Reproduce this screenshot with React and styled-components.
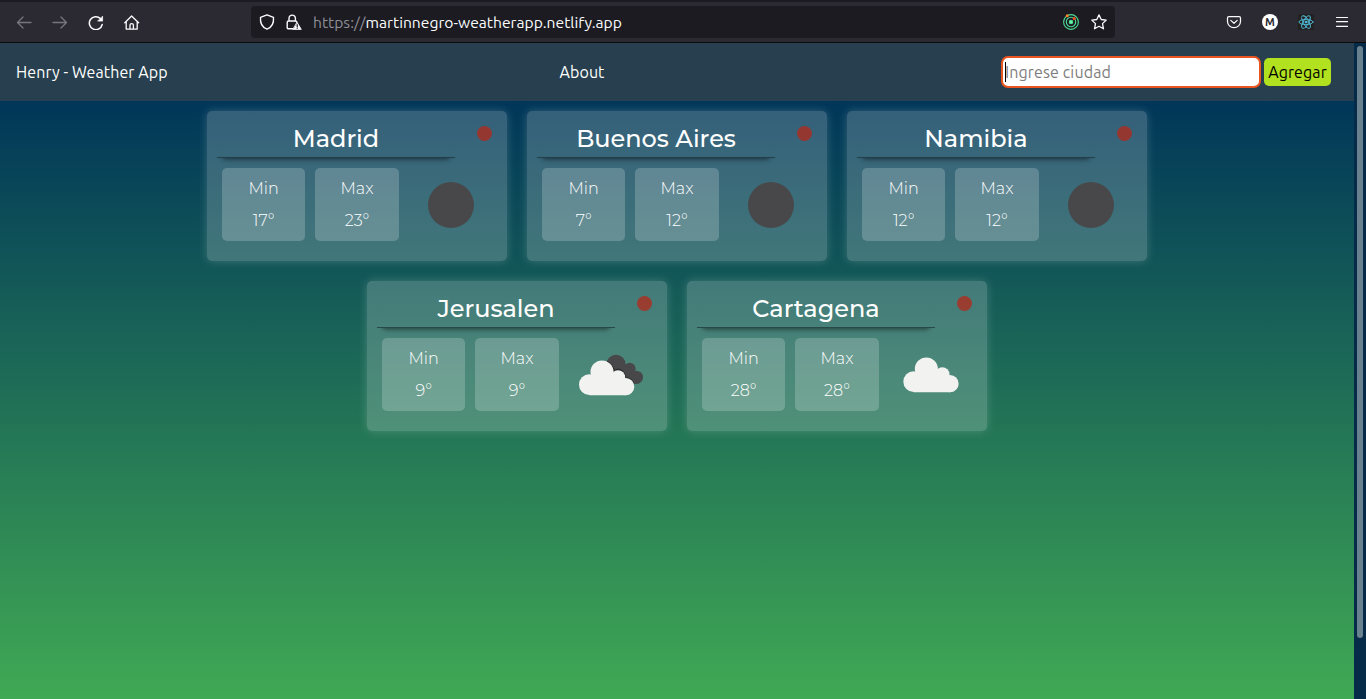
import React from "react";
import styled, { createGlobalStyle } from "styled-components";

const GlobalStyle = createGlobalStyle`
  *, *::before, *::after { box-sizing: border-box; }
  body { margin: 0; overflow: hidden; }
`;

const uiFont = `Ubuntu, "Noto Sans", sans-serif`;
const cardFont = `Montserrat, Inter, sans-serif`;

const Window = styled.div`
  display: flex;
  flex-direction: column;
  height: 100vh;
  font-family: ${uiFont};
`;

/* Browser toolbar */

const Toolbar = styled.header`
  display: flex;
  align-items: center;
  flex: none;
  height: 43px;
  padding: 0 16px 1px;
  border-top: 2px solid #1c1b22;
  border-bottom: 1px solid #0c0c0d;
  background: #2b2a33;
`;

const IconGroup = styled.div`
  display: flex;
  align-items: center;
  gap: ${(p) => p.$gap}px;
`;

const Icon = styled.svg`
  display: block;
  flex: none;
  width: 16px;
  height: 16px;
  fill: none;
  stroke: ${(p) => (p.$dim ? "#77767d" : "#fbfbfe")};
  stroke-width: 1.3;
  stroke-linecap: round;
  stroke-linejoin: round;
`;

const AddressBar = styled.div`
  display: flex;
  align-items: center;
  width: 864px;
  height: 32px;
  margin: 0 auto 0 111px;
  padding: 0 8px;
  border-radius: 4px;
  background: #1c1b22;
`;

const Url = styled.div`
  flex: 1;
  margin-left: 11px;
  color: #fbfbfe;
  font-size: 15.65px;
  line-height: 20px;
`;

const Scheme = styled.span`
  color: #8f8e96;
`;

const Avatar = styled.div`
  display: grid;
  place-items: center;
  width: 16px;
  height: 16px;
  border-radius: 50%;
  background: #fff;
  color: #2b2a33;
  font: 700 11px/16px ${uiFont};
`;

const ReactBadge = styled.div`
  width: 16px;
  height: 16px;
  background: #222;
`;

/* Page */

const Viewport = styled.div`
  display: flex;
  flex: 1;
  min-height: 0;
`;

const Page = styled.main`
  display: flex;
  flex: 1;
  flex-direction: column;
  min-width: 0;
  background: linear-gradient(#003659 58px, #40a954);
`;

const Scrollbar = styled.div`
  width: 12px;
  padding: 3px 3px 61px;
  background: #052b48;
`;

const Thumb = styled.div`
  width: 6px;
  height: 100%;
  border-radius: 3px;
  background: #69808f;
`;

const NavBar = styled.nav`
  display: flex;
  align-items: center;
  flex: none;
  height: 58px;
  padding: 0 23px 0 16px;
  background: #273f4e;
  color: #fff;
  font-size: 16px;
  letter-spacing: 0.09px;
`;

const Brand = styled.div`
  width: 543.5px;
`;

const SearchForm = styled.form`
  display: flex;
  align-items: center;
  gap: 3px;
  margin-left: auto;
`;

const Field = styled.div`
  position: relative;
  &::before {
    content: "";
    position: absolute;
    left: 4px;
    top: 6px;
    width: 1px;
    height: 20px;
    background: #000;
  }
`;

const CityInput = styled.input`
  display: block;
  width: 260px;
  height: 32px;
  padding: 0 2px;
  border: 2px solid #e95420;
  border-radius: 7px;
  outline: none;
  background: #fff;
  font: 16px ${uiFont};
  letter-spacing: 0.13px;
  &::placeholder { color: #7d7d7d; opacity: 1; }
`;

const AddButton = styled.button`
  width: 67px;
  height: 28px;
  padding: 0;
  border: 0;
  border-radius: 5px;
  background: #b1e11f;
  color: #000;
  font: 16px ${uiFont};
  letter-spacing: 0.1px;
`;

const Cards = styled.section`
  display: flex;
  flex-wrap: wrap;
  justify-content: center;
  gap: 20px;
  width: 940px;
  margin: 10px auto;
`;

const Card = styled.article`
  display: flex;
  flex-direction: column;
  width: 300px;
  height: 150px;
  padding: 10px;
  border-radius: 5px;
  background: rgba(255, 255, 255, 0.205);
  box-shadow: 0 0 10px rgba(255, 255, 255, 0.2);
  color: #fff;
  font-family: ${cardFont};
`;

const CardHead = styled.div`
  display: flex;
  align-items: flex-start;
`;

const City = styled.h2`
  width: 238px;
  height: 37px;
  margin: 0;
  border-bottom: 1px solid rgba(20, 35, 40, 0.6);
  box-shadow: 0 7px 5px -6px rgba(0, 0, 0, 0.55);
  font-size: 24px;
  font-weight: 500;
  line-height: 36px;
  text-align: center;
`;

const CloseDot = styled.button`
  width: 15px;
  height: 15px;
  margin: 5px 0 0 22px;
  padding: 0;
  border: 0;
  border-radius: 50%;
  background: rgba(182, 40, 26, 0.75);
`;

const Readings = styled.div`
  display: flex;
  gap: 10px;
  padding: 10px 5px 0;
`;

const Reading = styled.div`
  width: 83.33px;
  height: 73px;
  padding-top: 5px;
  border-radius: 5px;
  background: rgba(255, 255, 255, 0.2);
  font-size: 16px;
  font-weight: 300;
  line-height: 32px;
  text-align: center;
`;

const Sky = styled.svg`
  display: block;
  width: 80px;
  height: 80px;
  margin: -3px 0 0 2.33px;
`;

const WhiteCloud = () => (
  <g fill="#f2f2f0">
    <circle cx="55" cy="149" r="31" />
    <circle cx="93" cy="111" r="34.5" />
    <circle cx="141" cy="127" r="21.5" />
    <circle cx="164" cy="155" r="26" />
    <path d="M55 120H150L164 140V180.5H55Z" />
  </g>
);

function SkyIcon({ kind }) {
  return (
    <Sky viewBox="0 0 240 240">
      {kind === "night" && <circle cx="120" cy="120" r="69" fill="#48484a" />}
      {kind === "cloud" && (
        <g transform="translate(13 -9)">
          <WhiteCloud />
        </g>
      )}
      {kind === "clouds" && (
        <>
          <g fill="#48484a">
            <circle cx="135" cy="88" r="28.5" />
            <circle cx="176" cy="101" r="18" />
            <circle cx="196" cy="127" r="20" />
            <path d="M112 80L176 95L190 147Q177 129 164 128Q158 105 140 102Q126 100 126 107Z" />
          </g>
          <path
            d="M108 79Q126 91 128 106Q158 96 164 128Q181 129 189 147"
            fill="none"
            stroke="#292d2d"
            strokeWidth="4"
          />
          <WhiteCloud />
        </>
      )}
    </Sky>
  );
}

const cities = [
  { name: "Madrid", min: 17, max: 23, sky: "night" },
  { name: "Buenos Aires", min: 7, max: 12, sky: "night" },
  { name: "Namibia", min: 12, max: 12, sky: "night" },
  { name: "Jerusalen", min: 9, max: 9, sky: "clouds" },
  { name: "Cartagena", min: 28, max: 28, sky: "cloud" },
];

function CityCard({ name, min, max, sky }) {
  return (
    <Card>
      <CardHead>
        <City>{name}</City>
        <CloseDot aria-label="Cerrar" />
      </CardHead>
      <Readings>
        <Reading>
          <div>Min</div>
          <div>{min}°</div>
        </Reading>
        <Reading>
          <div>Max</div>
          <div>{max}°</div>
        </Reading>
        <SkyIcon kind={sky} />
      </Readings>
    </Card>
  );
}

function BrowserToolbar() {
  return (
    <Toolbar>
      <IconGroup $gap={20}>
        <Icon $dim viewBox="0 0 16 16"><path d="M15 8.5H1.5M7 3L1.5 8.5L7 14" /></Icon>
        <Icon $dim viewBox="0 0 16 16"><path d="M1 8.5H14.5M9 3L14.5 8.5L9 14" /></Icon>
        <Icon viewBox="0 0 16 16">
          <path d="M14.2 10.5A6.5 6.5 0 1 1 12.4 4.5" strokeWidth="1.5" />
          <path d="M14.6 2.5V7.1H10Z" fill="#fbfbfe" strokeWidth=".7" />
        </Icon>
        <Icon viewBox="0 0 16 16">
          <path d="M.8 8.7L7.6 2L14.6 8.7M2.2 7.7V15.1H13.2V7.7M6 14.9V10.9Q6 9.7 7.7 9.7T9.4 10.9V14.9" />
        </Icon>
      </IconGroup>
      <AddressBar>
        <IconGroup $gap={11}>
          <Icon viewBox="0 0 16 16">
            <path d="M8 .9L14.5 3.3C15 9.5 12.6 13.5 8 15.2C3.4 13.5 1 9.5 1.5 3.3Z" strokeWidth="1.4" />
          </Icon>
          <Icon viewBox="0 0 16 16">
            <path d="M7 14.8H2.6Q1.2 14.8 1.2 13.4V8.4Q1.2 7 2.6 7H9.5Q10.6 7 10.8 8M3 7V4.3A3.2 3.2 0 0 1 9.4 4.3V7" strokeWidth="1.4" />
            <path d="M11.2 8.5L15.3 15.4H7.1Z" fill="#fbfbfe" strokeWidth=".8" />
            <path d="M11.2 10.6V12.7M11.2 14.2V14.3" stroke="#1c1b22" strokeWidth="1.2" />
          </Icon>
        </IconGroup>
        <Url><Scheme>https://</Scheme>martinnegro-weatherapp.netlify.app</Url>
        <IconGroup $gap={12}>
          <Icon viewBox="0 0 16 16">
            <g stroke="#4ddf96" strokeWidth="1.1">
              <circle cx="8" cy="8" r="7.4" />
              <circle cx="8" cy="8" r="4.7" />
              <circle cx="8" cy="8" r="1.7" fill="#6bf0b0" />
            </g>
            <circle cx="4.2" cy="1.7" r="1.5" fill="#ff8226" stroke="none" />
            <circle cx="11.2" cy="4.6" r="1.5" fill="#f25022" stroke="none" />
          </Icon>
          <Icon viewBox="0 0 16 16">
            <path d="M8 .9L10.2 5.5L15.2 6.1L11.5 9.6L12.5 14.8L8 12.3L3.5 14.8L4.5 9.6L.8 6.1L5.8 5.5Z" strokeWidth="1.3" />
          </Icon>
        </IconGroup>
      </AddressBar>
      <IconGroup $gap={20}>
        <Icon viewBox="0 0 16 16">
          <path d="M2.9 2.5H13.1Q14.5 2.5 14.5 3.9V7.6A6.5 6 0 0 1 1.5 7.6V3.9Q1.5 2.5 2.9 2.5ZM4.8 6.4L8 9.3L11.2 6.4" strokeWidth="1.25" />
        </Icon>
        <Avatar>M</Avatar>
        <ReactBadge>
          <Icon viewBox="0 0 16 16">
            <g stroke="#53c1de" strokeWidth=".9">
              <ellipse cx="8" cy="8" rx="7" ry="2.7" />
              <ellipse cx="8" cy="8" rx="7" ry="2.7" transform="rotate(60 8 8)" />
              <ellipse cx="8" cy="8" rx="7" ry="2.7" transform="rotate(120 8 8)" />
              <circle cx="8" cy="8" r="1" fill="#53c1de" />
            </g>
          </Icon>
        </ReactBadge>
        <Icon viewBox="0 0 16 16"><path d="M2.5 3.5H13.5M2.5 7.7H13.5M2.5 12.3H13.5" strokeWidth="1.2" /></Icon>
      </IconGroup>
    </Toolbar>
  );
}

export default function App() {
  return (
    <Window>
      <GlobalStyle />
      <BrowserToolbar />
      <Viewport>
        <Page>
          <NavBar>
            <Brand>Henry - Weather App</Brand>
            <span>About</span>
            <SearchForm>
              <Field>
                <CityInput placeholder="Ingrese ciudad" />
              </Field>
              <AddButton type="button">Agregar</AddButton>
            </SearchForm>
          </NavBar>
          <Cards>
            {cities.map((c) => <CityCard key={c.name} {...c} />)}
          </Cards>
        </Page>
        <Scrollbar><Thumb /></Scrollbar>
      </Viewport>
    </Window>
  );
}
